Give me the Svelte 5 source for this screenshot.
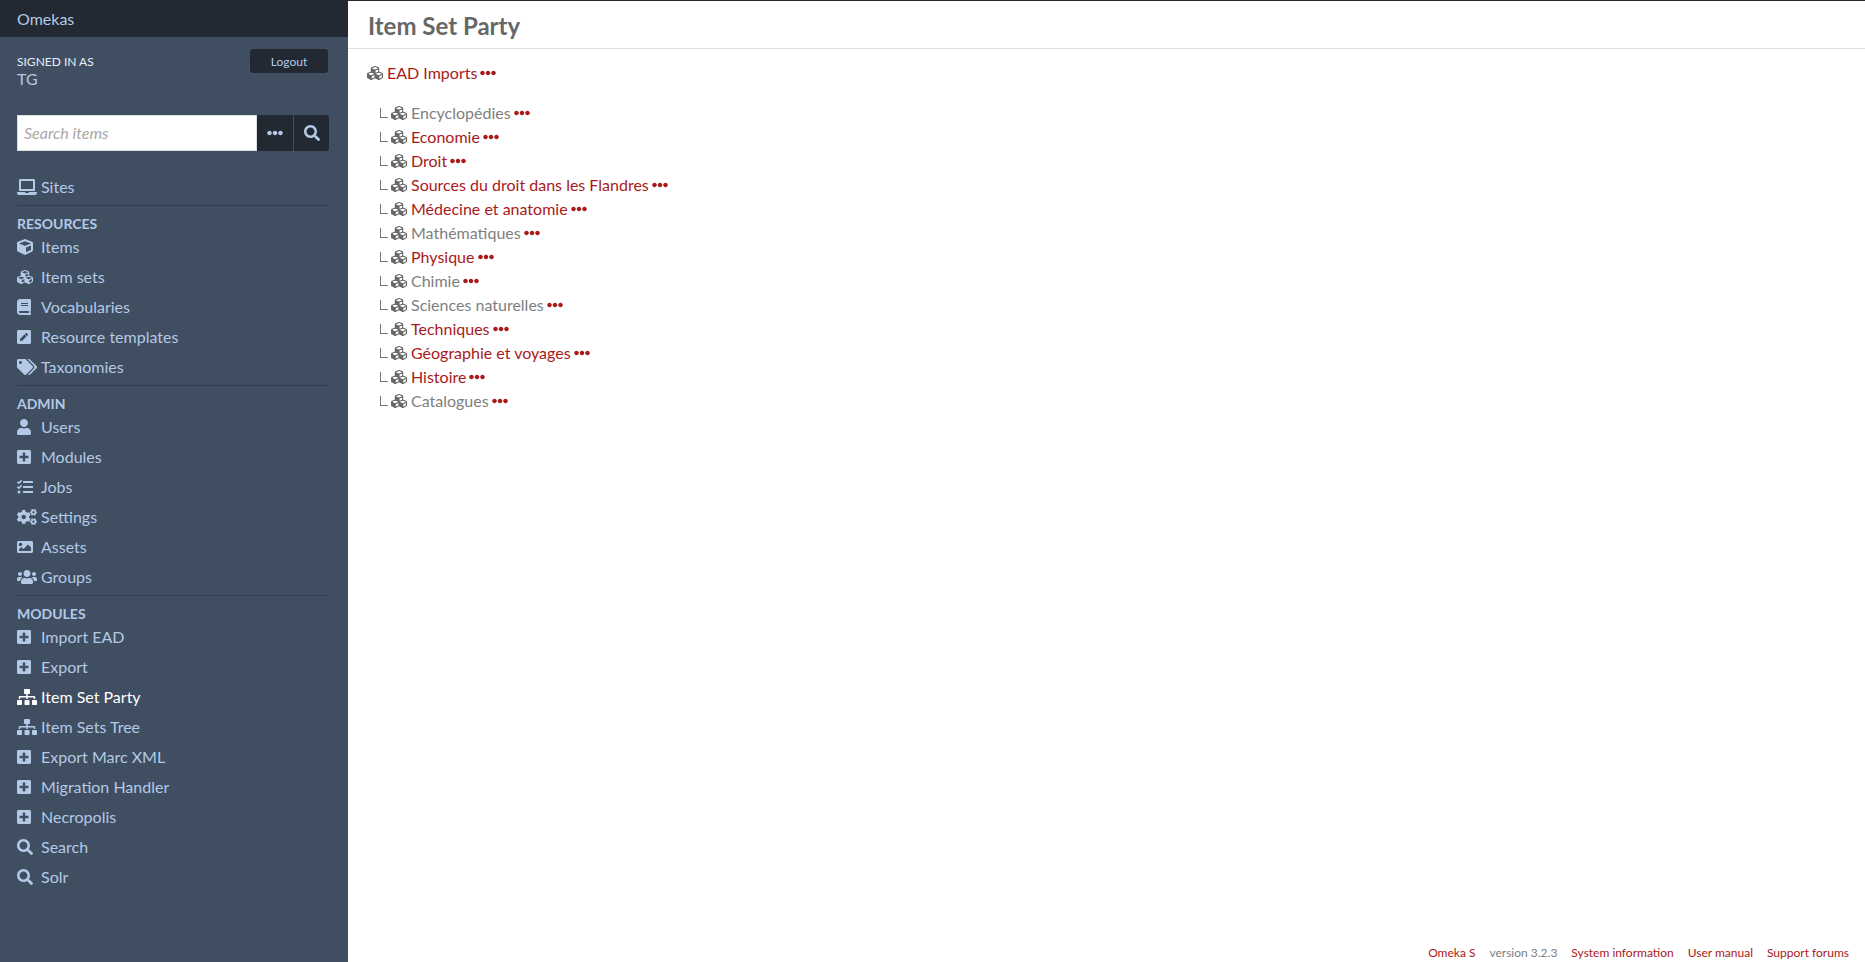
<script>
  const icons = {
    laptop: [640, 'M624 416H381.54c-.74 19.81-14.71 32-32.74 32H288c-18.69 0-33.02-17.47-32.77-32H16c-8.8 0-16 7.2-16 16v16c0 35.2 28.8 64 64 64h512c35.2 0 64-28.8 64-64v-16c0-8.8-7.2-16-16-16zM576 48c0-26.4-21.6-48-48-48H112C85.6 0 64 21.6 64 48v336h512V48zm-64 272H128V64h384v256z'],
    cube: [512, 'M239.1 6.3l-208 78c-18.7 7-31.1 25-31.1 45v225.1c0 18.2 10.3 34.8 26.5 42.9l208 104c13.5 6.8 29.4 6.8 42.9 0l208-104c16.3-8.1 26.5-24.8 26.5-42.9V129.3c0-20-12.4-37.9-31.1-44.9l-208-78C262 2.2 250 2.2 239.1 6.3zM256 68.4l192 72v1.1l-192 78-192-78v-1.1l192-72zm32 356V275.5l160-65v133.9l-160 80z'],
    cubes: [512, 'M488.6 250.2L392 214V105.5c0-15-9.3-28.4-23.4-33.7l-100-37.5c-8.1-3.1-17.1-3.1-25.3 0l-100 37.5c-14.1 5.3-23.4 18.7-23.4 33.7V214l-96.6 36.2C9.3 255.5 0 268.9 0 283.9V394c0 13.6 7.7 26.1 19.9 32.2l100 50c10.1 5.1 22.1 5.1 32.2 0l103.9-52 103.9 52c10.1 5.1 22.1 5.1 32.2 0l100-50c12.2-6.1 19.9-18.6 19.9-32.2V283.9c0-15-9.3-28.4-23.4-33.7zM358 214.8l-85 31.9v-68.2l85-37v73.3zM154 104.1l102-38.2 102 38.2v.6l-102 41.4-102-41.4v-.6zm84 291.1l-85 42.5v-79.1l85-38.8v75.4zm0-112l-102 41.4-102-41.4v-.6l102-38.2 102 38.2v.6zm240 112l-85 42.5v-79.1l85-38.8v75.4zm0-112l-102 41.4-102-41.4v-.6l102-38.2 102 38.2v.6z'],
    book: [448, 'M448 360V24c0-13.3-10.7-24-24-24H96C43 0 0 43 0 96v320c0 53 43 96 96 96h328c13.3 0 24-10.7 24-24v-16c0-7.5-3.5-14.3-8.9-18.7-4.2-15.4-4.2-59.3 0-74.7 5.4-4.3 8.9-11.1 8.9-18.6zM128 134c0-3.3 2.7-6 6-6h212c3.3 0 6 2.7 6 6v20c0 3.3-2.7 6-6 6H134c-3.3 0-6-2.7-6-6v-20zm0 64c0-3.3 2.7-6 6-6h212c3.3 0 6 2.7 6 6v20c0 3.3-2.7 6-6 6H134c-3.3 0-6-2.7-6-6v-20zm253.4 250H96c-17.7 0-32-14.3-32-32 0-17.6 14.4-32 32-32h285.4c-1.9 17.1-1.9 46.9 0 64z'],
    pen: [448, 'M400 480H48c-26.5 0-48-21.5-48-48V80c0-26.5 21.5-48 48-48h352c26.5 0 48 21.5 48 48v352c0 26.5-21.5 48-48 48zM238.1 177.9L102.4 313.6l-6.3 57.1c-.8 7.6 5.6 14.1 13.3 13.3l57.1-6.3L302.2 242c2.3-2.3 2.3-6.1 0-8.5L246.7 178c-2.5-2.4-6.3-2.4-8.6-.1zM345 165.1L314.9 135c-9.4-9.4-24.6-9.4-33.9 0l-23.1 23.1c-2.3 2.3-2.3 6.1 0 8.5l55.5 55.5c2.3 2.3 6.1 2.3 8.5 0L345 199c9.3-9.3 9.3-24.5 0-33.9z'],
    tags: [640, 'M497.941 225.941L286.059 14.059A48 48 0 0 0 252.118 0H48C21.49 0 0 21.49 0 48v204.118a48 48 0 0 0 14.059 33.941l211.882 211.882c18.744 18.745 49.136 18.746 67.882 0l204.118-204.118c18.745-18.745 18.745-49.137 0-67.882zM112 160c-26.51 0-48-21.49-48-48s21.49-48 48-48 48 21.49 48 48-21.49 48-48 48zm513.941 133.823L421.823 497.941c-18.745 18.745-49.137 18.745-67.882 0l-.36-.36L527.64 323.522c16.999-16.999 26.36-39.6 26.36-63.64s-9.362-46.641-26.36-63.64L331.397 0h48.721a48 48 0 0 1 33.941 14.059l211.882 211.882c18.745 18.745 18.745 49.137 0 67.882z'],
    user: [448, 'M224 256c70.7 0 128-57.3 128-128S294.7 0 224 0 96 57.3 96 128s57.3 128 128 128zm89.6 32h-16.7c-22.2 10.2-46.9 16-72.9 16s-50.6-5.8-72.9-16h-16.7C60.2 288 0 348.2 0 422.4V464c0 26.5 21.5 48 48 48h352c26.5 0 48-21.5 48-48v-41.6c0-74.2-60.2-134.4-134.4-134.4z'],
    plus: [448, 'M400 32H48C21.5 32 0 53.5 0 80v352c0 26.5 21.5 48 48 48h352c26.5 0 48-21.5 48-48V80c0-26.5-21.5-48-48-48zm-32 252c0 6.6-5.4 12-12 12h-92v92c0 6.6-5.4 12-12 12h-56c-6.6 0-12-5.4-12-12v-92H92c-6.6 0-12-5.4-12-12v-56c0-6.6 5.4-12 12-12h92v-92c0-6.6 5.4-12 12-12h56c6.6 0 12 5.4 12 12v92h92c6.6 0 12 5.4 12 12v56z'],
    tasks: [512, 'M139.61 35.5a12 12 0 0 0-17 0L58.93 98.81l-22.7-22.12a12 12 0 0 0-17 0L3.53 92.41a12 12 0 0 0 0 17l47.59 47.4a12.78 12.78 0 0 0 17.61 0l15.59-15.62L156.52 69a12.09 12.09 0 0 0 .09-17zm0 159.19a12 12 0 0 0-17 0l-63.68 63.72-22.7-22.1a12 12 0 0 0-17 0L3.53 252a12 12 0 0 0 0 17L51 316.5a12.77 12.77 0 0 0 17.6 0l15.7-15.69 72.2-72.22a12 12 0 0 0 .09-16.9zM64 368c-26.49 0-48.59 21.5-48.59 48S37.53 464 64 464a48 48 0 0 0 0-96zm432 16H208a16 16 0 0 0-16 16v32a16 16 0 0 0 16 16h288a16 16 0 0 0 16-16v-32a16 16 0 0 0-16-16zm0-320H208a16 16 0 0 0-16 16v32a16 16 0 0 0 16 16h288a16 16 0 0 0 16-16V80a16 16 0 0 0-16-16zm0 160H208a16 16 0 0 0-16 16v32a16 16 0 0 0 16 16h288a16 16 0 0 0 16-16v-32a16 16 0 0 0-16-16z'],
    cogs: [640, 'M512.1 191l-8.2 14.3c-3 5.3-9.4 7.5-15.1 5.4-11.8-4.4-22.6-10.7-32.1-18.6-4.6-3.8-5.8-10.5-2.8-15.7l8.2-14.3c-6.9-8-12.3-17.3-15.9-27.4h-16.5c-6 0-11.2-4.3-12.2-10.3-2-12-2.1-24.6 0-37.1 1-6 6.2-10.4 12.2-10.4h16.5c3.6-10.1 9-19.4 15.9-27.4l-8.2-14.3c-3-5.2-1.9-11.9 2.8-15.7 9.5-7.9 20.4-14.2 32.1-18.6 5.7-2.1 12.1.1 15.1 5.4l8.2 14.3c10.5-1.9 21.2-1.9 31.7 0L552 6.3c3-5.3 9.4-7.5 15.1-5.4 11.8 4.4 22.6 10.7 32.1 18.6 4.6 3.8 5.8 10.5 2.8 15.7l-8.2 14.3c6.9 8 12.3 17.3 15.9 27.4h16.5c6 0 11.2 4.3 12.2 10.3 2 12 2.1 24.6 0 37.1-1 6-6.2 10.4-12.2 10.4h-16.5c-3.6 10.1-9 19.4-15.9 27.4l8.2 14.3c3 5.2 1.9 11.9-2.8 15.7-9.5 7.9-20.4 14.2-32.1 18.6-5.7 2.1-12.1-.1-15.1-5.4l-8.2-14.3c-10.4 1.9-21.2 1.9-31.7 0zm-10.5-58.8c38.5 29.6 82.4-14.3 52.8-52.8-38.5-29.7-82.4 14.3-52.8 52.8zM386.3 286.1l33.7 16.8c10.1 5.8 14.5 18.1 10.5 29.1-8.9 24.2-26.4 46.4-42.6 65.8-7.4 8.9-20.2 11.1-30.3 5.3l-29.1-16.8c-16 13.7-34.6 24.6-54.9 31.7v33.6c0 11.6-8.3 21.6-19.7 23.6-24.6 4.2-50.4 4.4-75.9 0-11.5-2-20-11.9-20-23.6V418c-20.3-7.2-38.9-18-54.9-31.7L74 403c-10 5.8-22.9 3.6-30.3-5.3-16.2-19.4-33.3-41.6-42.2-65.7-4-10.9.4-23.2 10.5-29.1l33.3-16.8c-3.9-20.9-3.9-42.4 0-63.4L12 205.8c-10.1-5.8-14.6-18.1-10.5-29 8.9-24.2 26-46.4 42.2-65.8 7.4-8.9 20.2-11.1 30.3-5.3l29.1 16.8c16-13.7 34.6-24.6 54.9-31.7V57.1c0-11.5 8.2-21.5 19.6-23.5 24.6-4.2 50.5-4.4 76-.1 11.5 2 20 11.9 20 23.6v33.6c20.3 7.2 38.9 18 54.9 31.7l29.1-16.8c10-5.8 22.9-3.6 30.3 5.3 16.2 19.4 33.2 41.6 42.1 65.8 4 10.9.1 23.2-10 29.1l-33.7 16.8c3.9 21 3.9 42.5 0 63.5zm-117.6 21.1c59.2-77-28.7-164.9-105.7-105.7-59.2 77 28.7 164.9 105.7 105.7zm243.4 182.7l-8.2 14.3c-3 5.3-9.4 7.5-15.1 5.4-11.8-4.4-22.6-10.7-32.1-18.6-4.6-3.8-5.8-10.5-2.8-15.7l8.2-14.3c-6.9-8-12.3-17.3-15.9-27.4h-16.5c-6 0-11.2-4.3-12.2-10.3-2-12-2.1-24.6 0-37.1 1-6 6.2-10.4 12.2-10.4h16.5c3.6-10.1 9-19.4 15.9-27.4l-8.2-14.3c-3-5.2-1.9-11.9 2.8-15.7 9.5-7.9 20.4-14.2 32.1-18.6 5.7-2.1 12.1.1 15.1 5.4l8.2 14.3c10.5-1.9 21.2-1.9 31.7 0l8.2-14.3c3-5.3 9.4-7.5 15.1-5.4 11.8 4.4 22.6 10.7 32.1 18.6 4.6 3.8 5.8 10.5 2.8 15.7l-8.2 14.3c6.9 8 12.3 17.3 15.9 27.4h16.5c6 0 11.2 4.3 12.2 10.3 2 12 2.1 24.6 0 37.1-1 6-6.2 10.4-12.2 10.4h-16.5c-3.6 10.1-9 19.4-15.9 27.4l8.2 14.3c3 5.2 1.9 11.9-2.8 15.7-9.5 7.9-20.4 14.2-32.1 18.6-5.7 2.1-12.1-.1-15.1-5.4l-8.2-14.3c-10.4 1.9-21.2 1.9-31.7 0zM501.6 431c38.5 29.6 82.4-14.3 52.8-52.8-38.5-29.6-82.4 14.3-52.8 52.8z'],
    image: [512, 'M464 448H48c-26.51 0-48-21.49-48-48V112c0-26.51 21.49-48 48-48h416c26.51 0 48 21.49 48 48v288c0 26.51-21.49 48-48 48zM112 120c-30.928 0-56 25.072-56 56s25.072 56 56 56 56-25.072 56-56-25.072-56-56-56zM64 384h384V272l-87.515-87.515c-4.686-4.686-12.284-4.686-16.971 0L208 320l-55.515-55.515c-4.686-4.686-12.284-4.686-16.971 0L64 336v48z'],
    users: [640, 'M96 224c35.3 0 64-28.7 64-64s-28.7-64-64-64-64 28.7-64 64 28.7 64 64 64zm448 0c35.3 0 64-28.7 64-64s-28.7-64-64-64-64 28.7-64 64 28.7 64 64 64zm32 32h-64c-17.6 0-33.5 7.1-45.1 18.6 40.3 22.1 68.9 62 75.1 109.4h66c17.7 0 32-14.3 32-32v-32c0-35.3-28.7-64-64-64zm-256 0c61.9 0 112-50.1 112-112S381.9 32 320 32 208 82.1 208 144s50.1 112 112 112zm76.8 32h-8.3c-20.8 10-43.9 16-68.5 16s-47.6-6-68.5-16h-8.3C179.6 288 128 339.6 128 403.2V432c0 26.5 21.5 48 48 48h288c26.5 0 48-21.5 48-48v-28.8c0-63.6-51.6-115.2-115.2-115.2zm-223.7-13.4C161.5 263.1 145.6 256 128 256H64c-35.3 0-64 28.7-64 64v32c0 17.7 14.3 32 32 32h65.9c6.3-47.4 34.9-87.3 75.2-109.4z'],
    sitemap: [640, 'M128 352H32c-17.67 0-32 14.33-32 32v96c0 17.67 14.33 32 32 32h96c17.67 0 32-14.33 32-32v-96c0-17.67-14.33-32-32-32zm-24-80h192v48h48v-48h192v48h48v-57.59c0-21.17-17.23-38.41-38.41-38.41H344v-64h40c17.67 0 32-14.33 32-32V32c0-17.67-14.33-32-32-32H256c-17.67 0-32 14.33-32 32v96c0 17.67 14.33 32 32 32h40v64H94.41C73.23 224 56 241.23 56 262.41V320h48v-48zm264 80h-96c-17.67 0-32 14.33-32 32v96c0 17.67 14.33 32 32 32h96c17.67 0 32-14.33 32-32v-96c0-17.67-14.33-32-32-32zm240 0h-96c-17.67 0-32 14.33-32 32v96c0 17.67 14.33 32 32 32h96c17.67 0 32-14.33 32-32v-96c0-17.67-14.33-32-32-32z'],
    search: [512, 'M505 442.7L405.3 343c-4.5-4.5-10.6-7-17-7H372c27.6-35.3 44-79.7 44-128C416 93.1 322.9 0 208 0S0 93.1 0 208s93.1 208 208 208c48.3 0 92.7-16.4 128-44v16.3c0 6.4 2.5 12.5 7 17l99.7 99.7c9.4 9.4 24.6 9.4 33.9 0l28.3-28.3c9.4-9.4 9.4-24.6.1-34zM208 336c-70.7 0-128-57.2-128-128 0-70.7 57.2-128 128-128 70.7 0 128 57.2 128 128 0 70.7-57.2 128-128 128z'],
    ellipsis: [512, 'M328 256c0 39.8-32.2 72-72 72s-72-32.2-72-72 32.2-72 72-72 72 32.2 72 72zm104-72c-39.8 0-72 32.2-72 72s32.2 72 72 72 72-32.2 72-72-32.2-72-72-72zm-352 0c-39.8 0-72 32.2-72 72s32.2 72 72 72 72-32.2 72-72-32.2-72-72-72z']
  };

  const nav = [
    { items: [{ label: 'Sites', icon: 'laptop' }] },
    {
      title: 'Resources',
      items: [
        { label: 'Items', icon: 'cube' },
        { label: 'Item sets', icon: 'cubes' },
        { label: 'Vocabularies', icon: 'book' },
        { label: 'Resource templates', icon: 'pen' },
        { label: 'Taxonomies', icon: 'tags' }
      ]
    },
    {
      title: 'Admin',
      items: [
        { label: 'Users', icon: 'user' },
        { label: 'Modules', icon: 'plus' },
        { label: 'Jobs', icon: 'tasks' },
        { label: 'Settings', icon: 'cogs' },
        { label: 'Assets', icon: 'image' },
        { label: 'Groups', icon: 'users' }
      ]
    },
    {
      title: 'Modules',
      items: [
        { label: 'Import EAD', icon: 'plus' },
        { label: 'Export', icon: 'plus' },
        { label: 'Item Set Party', icon: 'sitemap', active: true },
        { label: 'Item Sets Tree', icon: 'sitemap' },
        { label: 'Export Marc XML', icon: 'plus' },
        { label: 'Migration Handler', icon: 'plus' },
        { label: 'Necropolis', icon: 'plus' },
        { label: 'Search', icon: 'search' },
        { label: 'Solr', icon: 'search' }
      ]
    }
  ];

  const sets = [
    { name: 'Encyclopédies', empty: true },
    { name: 'Economie' },
    { name: 'Droit' },
    { name: 'Sources du droit dans les Flandres' },
    { name: 'Médecine et anatomie' },
    { name: 'Mathématiques', empty: true },
    { name: 'Physique' },
    { name: 'Chimie', empty: true },
    { name: 'Sciences naturelles', empty: true },
    { name: 'Techniques' },
    { name: 'Géographie et voyages' },
    { name: 'Histoire' },
    { name: 'Catalogues', empty: true }
  ];
</script>

{#snippet icon(name, cls = '')}
  <svg class="fa {cls}" viewBox="0 0 {icons[name][0]} 512" style="width: {icons[name][0] / 32}px" aria-hidden="true">
    <path d={icons[name][1]} />
  </svg>
{/snippet}

{#snippet setRow(name, empty)}
  {@render icon('cubes', 'set-icon')}
  <a href="#top" class="set-name" class:empty>{name}</a>
  <button class="more">{@render icon('ellipsis')}</button>
{/snippet}

<div class="layout">
  <aside class="sidebar">
    <header class="brand">Omekas</header>

    <div class="user-bar">
      <div class="user-info">
        <div class="signed">Signed in as</div>
        <div class="user-name">TG</div>
      </div>
      <button class="logout">Logout</button>
    </div>

    <form class="search">
      <input type="text" placeholder="Search items" />
      <button type="button" class="search-btn">{@render icon('ellipsis')}</button>
      <button type="button" class="search-btn last">{@render icon('search')}</button>
    </form>

    <nav>
      {#each nav as group}
        <section class="group">
          {#if group.title}
            <h4>{group.title}</h4>
          {/if}
          <ul>
            {#each group.items as item}
              <li class:active={item.active}>
                <span class="nav-icon">{@render icon(item.icon)}</span>
                <span>{item.label}</span>
              </li>
            {/each}
          </ul>
        </section>
      {/each}
    </nav>
  </aside>

  <main class="content">
    <h1>Item Set Party</h1>

    <div class="tree">
      <div class="row root">{@render setRow('EAD Imports', false)}</div>
      <ul class="children">
        {#each sets as set}
          <li class="row child">{@render setRow(set.name, set.empty)}</li>
        {/each}
      </ul>
    </div>

    <footer>
      <a href="#top">Omeka S</a>
      <span>version 3.2.3</span>
      <a href="#top">System information</a>
      <a href="#top">User manual</a>
      <a href="#top">Support forums</a>
    </footer>
  </main>
</div>

<style>
  :global(body) {
    margin: 0;
    font-family: Lato, "Liberation Sans", sans-serif;
    font-size: 16px;
    color: #676767;
    background: #fff;
  }

  .layout {
    display: flex;
    height: 100vh;
    overflow: hidden;
  }

  .fa {
    height: 16px;
    fill: currentColor;
    display: block;
    flex: none;
  }

  .sidebar {
    width: 348px;
    flex: none;
    background: #404e61;
    color: #b3c9e6;
  }

  .brand {
    height: 37px;
    line-height: 38px;
    padding-left: 17px;
    background: #222933;
    box-sizing: border-box;
  }

  .user-bar {
    display: flex;
    justify-content: space-between;
    align-items: flex-start;
    padding: 12px 20px 0 17px;
    height: 78px;
    box-sizing: border-box;
  }

  .user-info {
    padding-top: 5px;
  }

  .signed {
    font-size: 12px;
    line-height: 16px;
    text-transform: uppercase;
    color: #e6edf7;
  }

  .user-name {
    line-height: 18px;
  }

  .logout {
    width: 78px;
    height: 24px;
    padding: 0;
    border: 0;
    border-radius: 3px;
    background: #222933;
    color: #b3c9e6;
    font: 12px Lato, sans-serif;
  }

  .search {
    display: flex;
    margin: 0 19px 0 17px;
    height: 36px;
  }

  .search input {
    width: 240px;
    box-sizing: border-box;
    border: 1px solid #dfdfdf;
    padding: 0 6px 2px;
    font: 16px Lato, sans-serif;
    background: #fff;
    outline: 0;
  }

  .search input::placeholder {
    color: #a8a8a8;
    font-style: italic;
    opacity: 1;
  }

  .search-btn {
    width: 36px;
    padding: 0;
    border: 0;
    background: #222933;
    color: #b3c9e6;
    display: flex;
    align-items: center;
    justify-content: center;
  }

  .search-btn.last {
    margin-left: 1px;
    width: 35px;
    border-radius: 0 3px 3px 0;
  }

  nav {
    margin: 0 19px 0 17px;
    padding-top: 20px;
  }

  .group {
    border-bottom: 1px solid #323e4e;
    padding-bottom: 4px;
    margin-bottom: 10px;
  }

  .group:last-child {
    border-bottom: 0;
  }

  .group h4 {
    margin: 0 0 -1px;
    font-size: 14px;
    line-height: 16px;
    font-weight: 700;
    text-transform: uppercase;
    color: #b3c9e6;
  }

  .group ul {
    list-style: none;
    margin: 0;
    padding: 0;
  }

  .group li {
    display: flex;
    align-items: center;
    height: 30px;
  }

  .group li.active {
    color: #fff;
  }

  .nav-icon {
    width: 24px;
    flex: none;
    margin-top: 2px;
  }

  .content {
    flex: 1;
    min-width: 0;
    display: flex;
    flex-direction: column;
    border-top: 1px solid #222933;
    box-sizing: border-box;
  }

  h1 {
    margin: 0;
    height: 47px;
    line-height: 49px;
    padding-left: 20px;
    font-size: 24px;
    font-weight: 700;
    color: #676767;
    border-bottom: 1px solid #dfdfdf;
  }

  .tree {
    flex: 1;
    padding: 11px 19px 0;
  }

  .row {
    display: flex;
    align-items: center;
    height: 24px;
  }

  .children {
    list-style: none;
    margin: 16px 0 0;
    padding: 0 0 0 13px;
  }

  .child {
    position: relative;
    padding-left: 11px;
  }

  .child::before {
    content: "";
    position: absolute;
    left: 0;
    top: 8px;
    width: 7px;
    height: 9px;
    border-left: 1px solid #777;
    border-bottom: 1px solid #777;
  }

  .fa.set-icon {
    margin: 2px 4px 0 0;
    color: #676767;
  }

  .set-name {
    color: #a91919;
    text-decoration: none;
  }

  .set-name.empty {
    color: #808080;
  }

  .more {
    border: 0;
    background: none;
    padding: 0;
    margin: 2px 0 0 3px;
    color: #a91919;
  }

  footer {
    display: flex;
    justify-content: flex-end;
    gap: 14px;
    padding: 0 16px 1px 0;
    font-size: 12px;
    line-height: 16px;
    color: #808080;
  }

  footer a {
    color: #a91919;
    text-decoration: none;
  }
</style>
